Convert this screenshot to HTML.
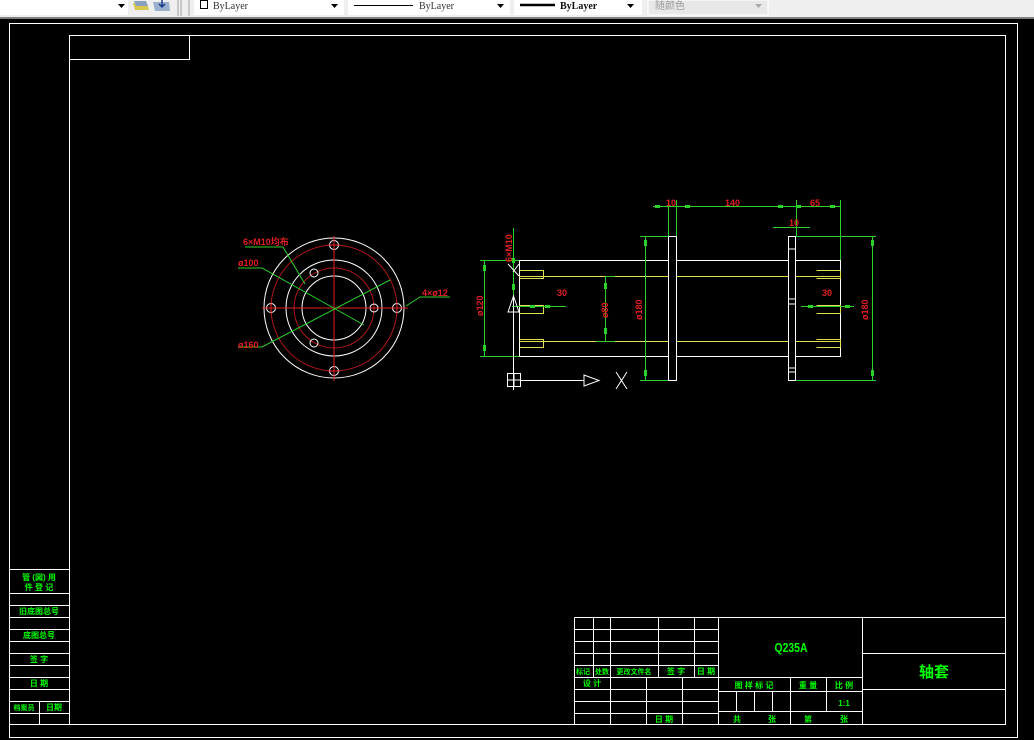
<!DOCTYPE html>
<html><head><meta charset="utf-8"><style>
html,body{margin:0;padding:0;width:1034px;height:740px;overflow:hidden;background:#000}
svg{display:block}
.t{font-family:"Liberation Sans","Noto Sans CJK SC",sans-serif}
</style></head><body>
<svg width="1034" height="740" viewBox="0 0 1034 740" xmlns="http://www.w3.org/2000/svg">
<!-- toolbar -->
<rect x="0" y="0" width="1034" height="18" fill="#efefef"/>
<rect x="0" y="17" width="1034" height="2" fill="#808080"/>
<rect x="0" y="0" width="128" height="15" fill="#fff"/>
<path d="M118 4 L125 4 L121.5 8 Z" fill="#000"/>
<path d="M133 3 L147 3 L149 10 L135 10 Z" fill="#d8c850"/><path d="M134 1 L146 1 L148 6 L136 6Z" fill="#8aa0c0"/>
<path d="M153 2 L169 2 L170 11 L155 11 Z" fill="#9ab0cc"/><path d="M162 0 L162 6 M159 4 L162 7 L165 4" stroke="#1c3c8c" stroke-width="1.5" fill="none"/>
<line x1="178" y1="0" x2="178" y2="16" stroke="#a0a0a0"/><line x1="181" y1="0" x2="181" y2="16" stroke="#a0a0a0"/><line x1="189" y1="0" x2="189" y2="16" stroke="#a0a0a0"/>
<rect x="194" y="0" width="150" height="15" fill="#fff"/>
<rect x="200.5" y="0.5" width="7" height="8" fill="none" stroke="#000"/>
<text x="213" y="9" font-family="Liberation Serif" font-size="10" fill="#333">ByLayer</text>
<path d="M331 4 L338 4 L334.5 8 Z" fill="#000"/>
<rect x="348" y="0" width="162" height="15" fill="#fff"/>
<line x1="354" y1="5.5" x2="413" y2="5.5" stroke="#000"/>
<text x="419" y="9" font-family="Liberation Serif" font-size="10" fill="#333">ByLayer</text>
<path d="M497 4 L504 4 L500.5 8 Z" fill="#000"/>
<rect x="514" y="0" width="128" height="15" fill="#fff"/>
<line x1="520" y1="5" x2="555" y2="5" stroke="#000" stroke-width="2.5"/>
<text x="560" y="9" font-family="Liberation Serif" font-size="10" font-weight="bold" fill="#111">ByLayer</text>
<path d="M627 4 L634 4 L630.5 8 Z" fill="#000"/>
<rect x="648" y="0" width="120" height="15" fill="#e8e8e8" stroke="#fff"/>
<text x="655" y="9" class="t" font-size="10" fill="#999">随颜色</text>
<path d="M755 4 L762 4 L758.5 8 Z" fill="#aaa"/>

<g fill="none" stroke="#fff" stroke-width="1">
<rect x="9.5" y="23.5" width="1008" height="714"/>
<rect x="69.5" y="35.5" width="936" height="689"/>
<rect x="69.5" y="35.5" width="120" height="24"/>
<path d="M9.5 569.5H69.5 M9.5 593.5H69.5 M9.5 605.5H69.5 M9.5 617.5H69.5 M9.5 629.5H69.5 M9.5 641.5H69.5 M9.5 653.5H69.5 M9.5 665.5H69.5 M9.5 677.5H69.5 M9.5 689.5H69.5 M9.5 701.5H69.5 M9.5 713.5H69.5 M9.5 724.5H69.5 M39.5 701.5V724.5"/>
<path d="M574.5 617.5H1005.5 M574.5 617.5V724.5 M574.5 629.5H718.5 M574.5 641.5H718.5 M574.5 653.5H718.5 M574.5 665.5H718.5 M574.5 677.5H862.5 M574.5 689.5H718.5 M574.5 701.5H718.5 M574.5 713.5H718.5
M593.5 617.5V677.5 M610.5 617.5V724.5 M658.5 617.5V677.5 M694.5 617.5V677.5 M718.5 617.5V724.5 M862.5 617.5V724.5
M646.5 677.5V724.5 M682.5 677.5V724.5 M718.5 691.5H862.5 M718.5 711.5H862.5 M790.5 677.5V724.5 M826.5 677.5V711.5 M736.5 691.5V711.5 M754.5 691.5V711.5 M772.5 691.5V711.5
M862.5 653.5H1005.5 M862.5 689.5H1005.5"/>
</g>
<g class="t" fill="#00ff00" font-size="8" font-weight="bold" text-anchor="middle">
<text x="39" y="580">管 (図) 用</text><text x="39" y="590">件 登 记</text>
<text x="39" y="614">旧底图总号</text><text x="39" y="638">底图总号</text>
<text x="39" y="662">签 字</text><text x="39" y="686">日 期</text>
<text x="24" y="710" font-size="7">档案员</text><text x="54" y="710">日期</text>
<text x="583" y="674" font-size="7">标记</text><text x="602" y="674" font-size="7">处数</text><text x="634" y="674" font-size="7">更改文件名</text><text x="676" y="674">签 字</text><text x="706" y="674">日 期</text>
<text x="592" y="686">设 计</text><text x="664" y="722">日 期</text>
<text x="754" y="688">图 样 标 记</text><text x="808" y="688">重 量</text><text x="844" y="688">比 例</text>
<text x="844" y="706">1:1</text>
<text x="737" y="722">共</text><text x="772" y="722">张</text><text x="808" y="722">第</text><text x="844" y="722">张</text>
<text x="791" y="652" font-size="13" transform="translate(791,0) scale(0.8,1) translate(-791,0)">Q235A</text>
<text x="934" y="677" font-size="15">轴套</text>
</g>

<g fill="none">
<circle cx="334" cy="308" r="70" stroke="#fff"/>
<circle cx="334" cy="308" r="48" stroke="#fff"/>
<circle cx="334" cy="308" r="32" stroke="#fff"/>
<circle cx="334" cy="308" r="63" stroke="#b01818"/>
<circle cx="334" cy="308" r="40" stroke="#b01818"/>
<circle cx="334" cy="245" r="4.5" stroke="#fff"/><circle cx="334" cy="371" r="4.5" stroke="#fff"/>
<circle cx="271" cy="308" r="4.5" stroke="#fff"/><circle cx="397" cy="308" r="4.5" stroke="#fff"/>
<circle cx="374" cy="308" r="4" stroke="#fff"/><circle cx="314" cy="273" r="4" stroke="#fff"/><circle cx="314" cy="343" r="4" stroke="#fff"/>
<path d="M334 236V381 M262 308H408 M328 245H340 M328 371H340 M271 302V314 M397 302V314" stroke="#e02020"/>
<path d="M245 247H283 L305 284 M238 268H262 L364 325 M238 347H262 L390 280 M450 297H420 L406 306" stroke="#2bd02b"/>
</g>
<g class="t" fill="#e02020" font-size="9" font-weight="bold">
<text x="243" y="245">6×M10均布</text><text x="238" y="266">ø100</text><text x="238" y="348">ø160</text><text x="422" y="296">4×ø12</text>
</g>

<g fill="none">
<rect x="519.5" y="260.5" width="321" height="96" stroke="#fff"/>
<rect x="668.5" y="236.5" width="8" height="144" stroke="#fff" fill="#000"/>
<rect x="788.5" y="236.5" width="7" height="144" stroke="#fff" fill="#000"/>
<path d="M789 249H795 M789 299H795 M789 304H795 M789 368H795 M789 372H795" stroke="#fff"/>
<path d="M519 276.5H668 M677 276.5H788 M796 276.5H841 M519 341.5H668 M677 341.5H788 M796 341.5H841" stroke="#e0e050"/>
<path d="M519.5 270.5H543.5V278.5H519.5 M519.5 305.5H543.5V313.5H519.5 M519.5 339.5H543.5V347.5H519.5 M816.5 270.5H840.5V278.5H816.5 M816.5 305.5H840.5V313.5H816.5 M816.5 339.5H840.5V347.5H816.5" stroke="#e0e050"/>
<g stroke="#2bd02b">
<path d="M653 206.5H840 M668.5 200V236 M676.5 200V236 M796.5 200V236 M840.5 200V260 M773 227.5H810"/>
<path d="M640 236.5H668 M640 380.5H668 M645.5 236V381 M796 236.5H876 M796 380.5H876 M872.5 236V381"/>
<path d="M480 260.5H519 M480 356.5H519 M484.5 260V357 M605 276.5H615 M596 341.5H615 M605.5 276V342 M512 306.5H566 M801 306.5H854 M513.5 228V300"/>
</g>
<g fill="#2bd02b">
<rect x="655" y="205" width="5" height="3"/><rect x="685" y="205" width="5" height="3"/><rect x="778" y="205" width="5" height="3"/><rect x="796" y="205" width="5" height="3"/><rect x="830" y="205" width="5" height="3"/>
<rect x="644" y="240" width="3" height="6"/><rect x="644" y="370" width="3" height="6"/><rect x="871" y="240" width="3" height="6"/><rect x="871" y="370" width="3" height="6"/>
<rect x="483" y="265" width="3" height="6"/><rect x="483" y="345" width="3" height="6"/><rect x="604" y="283" width="3" height="6"/><rect x="604" y="328" width="3" height="6"/>
<rect x="512" y="258" width="3" height="5"/><rect x="512" y="284" width="3" height="6"/><rect x="530" y="305" width="5" height="3"/><rect x="545" y="305" width="5" height="3"/><rect x="808" y="305" width="5" height="3"/><rect x="845" y="305" width="5" height="3"/>
</g>
<path d="M513.5 296V390 M507.5 373.5h13v13h-13z M507.5 380H520.5 M514 373.5V386.5 M520.5 380.5H584 M584 375L599 380.5L584 386Z M508 312L513.5 296L519 312Z M508 264L519 276 M519 264L513 272 M616 372L627 389 M627 372L616 389" stroke="#fff"/>
</g>
<g class="t" fill="#e02020" font-size="9" font-weight="bold">
<text x="666" y="206">10</text><text x="725" y="206">140</text><text x="810" y="206">65</text><text x="789" y="226">10</text>
<text x="557" y="296">30</text><text x="822" y="296">30</text>
<text transform="translate(483,316) rotate(-90)">ø120</text>
<text transform="translate(608,318) rotate(-90)">ø80</text>
<text transform="translate(642,320) rotate(-90)">ø180</text>
<text transform="translate(868,320) rotate(-90)">ø180</text>
<text transform="translate(512,262) rotate(-90)">6×M10</text>
</g>
</svg>
</body></html>
